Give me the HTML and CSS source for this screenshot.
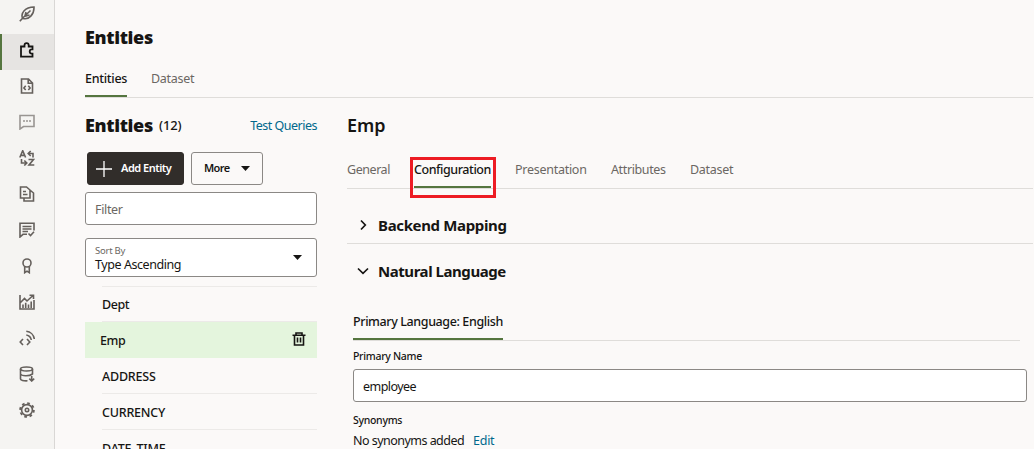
FILE: index.html
```html
<!DOCTYPE html>
<html lang="en">
<head>
<meta charset="utf-8">
<title>Entities</title>
<link rel="stylesheet" href="styles.css">
</head>
<body>
<div class="app">
  <nav class="rail">
    <a class="rail-item"><svg viewBox="0 0 16 16"><path d="M.8 15.300 3.500 12.300C1.500 7 6 1.200 15 1 15.300 8 10 14.500 3.500 12.300M3.500 12.300 11.500 4.500M6 10 7 6M6 10.200 10.500 9"/></svg></a>
    <a class="rail-item selected"><svg viewBox="0 0 16 16"><path d="M2 4.500H5.500V3.300a2 2 0 0 1 4.200 0V4.500H13.500V7.400h-.7a2.100 2.100 0 0 0 0 4.200h.7v3H2z"/></svg></a>
    <a class="rail-item"><svg viewBox="0 0 16 16"><path d="M2.500 1H9.500L13.500 5V15H2.500zM9.200 1V5.200H13.500M6.700 7.800 4.900 9.900 6.700 12M9.300 7.800 11.100 9.900 9.300 12"/></svg></a>
    <a class="rail-item muted"><svg viewBox="0 0 16 16"><path d="M1 1.500H15V12.500H4.500L1 15z"/><path d="M4 7h2M7 7h2M10 7h2"/></svg></a>
    <a class="rail-item"><svg viewBox="0 0 16 16"><path d="M.8 7.500 3.700 .7 6.600 7.500M1.800 5.400H5.600M9.500 9.500H14.500L10 15H15.300M14 7.500V3.500H9.500M11.700 1 9.200 3.500 11.700 6M2.500 9V13H7.500M5.300 10.500 7.800 13 5.300 15.500"/></svg></a>
    <a class="rail-item"><svg viewBox="0 0 16 16"><path d="M1.500 1H7.500L11 4V12H1.500zM4 5.500H7M4 8.500H8.500M11.500 4.500 14.500 7V15H5V12.500"/></svg></a>
    <a class="rail-item"><svg viewBox="0 0 16 16"><path d="M15 8.500V1.300H1V15L4 12.300H8M3.500 4.500H12.500M3.500 7H12.500M3.500 9.500H9M9.500 11.500 11.500 13.500 15 9.800"/></svg></a>
    <a class="rail-item"><svg viewBox="0 0 16 16"><circle cx="8" cy="5" r="4"/><path d="M5.700 8.500V14.700L8 13.200 10.300 14.700V8.500"/></svg></a>
    <a class="rail-item"><svg viewBox="0 0 16 16"><path d="M1 1V15H15V6M1.500 8.500 5.500 4.500 8 7 14 1.500M10.500 1.200H14.500V5M4 14V10.500M6.700 14V8.800M9.500 14V10.500M12.200 14V7.500"/></svg></a>
    <a class="rail-item"><svg viewBox="0 0 16 16"><path d="M4 9 1.200 12 4 15M8 9 10.800 12 8 15M7.300 5A6 6 0 0 1 12.300 10M7.300 1.200A9 9 0 0 1 15.300 9"/></svg></a>
    <a class="rail-item"><svg viewBox="0 0 16 16"><ellipse cx="7.500" cy="3" rx="6" ry="2"/><path d="M1.500 3V13C1.500 14.300 4.500 15 8.500 14.800M13.500 3V8.500M1.500 8C2.500 10 10 10.500 13.500 8M12.700 10V15M10.300 12.700 12.700 15 15.200 12.700"/></svg></a>
    <a class="rail-item"><svg viewBox="0 0 16 16"><circle cx="8" cy="8" r="5.400"/><circle cx="8" cy="8" r="1.700"/><circle class="teeth" cx="8" cy="8" r="6.900"/></svg></a>
  </nav>

  <main class="main">
    <h1 class="title">Entities</h1>
    <div class="tabs page-tabs">
      <a class="tab active t-entities">Entities</a>
      <a class="tab t-dataset">Dataset</a>
    </div>

    <div class="columns">
      <section class="list-pane">
        <header class="list-head">
          <h2 class="title">Entities</h2>
          <span class="count">(12)</span>
          <a class="link queries">Test Queries</a>
        </header>
        <div class="buttons">
          <button class="btn primary"><svg class="plus" viewBox="0 0 16 16"><path d="M8 0V16M0 8H16"/></svg><span>Add Entity</span></button>
          <button class="btn more"><span>More</span><i class="caret"></i></button>
        </div>
        <div class="field filter">Filter</div>
        <div class="field select">
          <div><div class="select-label">Sort By</div><div class="select-value">Type Ascending</div></div>
          <i class="caret"></i>
        </div>
        <ul class="entities">
          <li class="entity first">Dept</li>
          <li class="entity current"><span>Emp</span><svg class="trash" viewBox="0 0 14 14"><path d="M.5 3.200H13.500M4 3V1H10V3M2.500 3.500V13H11.500V3.500M5.500 5.500V10.500M8.500 5.500V10.500"/></svg></li>
          <li class="entity caps">ADDRESS</li>
          <li class="entity caps">CURRENCY</li>
          <li class="entity caps">DATE_TIME</li>
        </ul>
      </section>

      <section class="detail">
        <h2 class="detail-title">Emp</h2>
        <div class="tabs detail-tabs">
          <a class="tab t-general">General</a>
          <a class="tab active t-config">Configuration<span class="marker"></span></a>
          <a class="tab t-present">Presentation</a>
          <a class="tab t-attr">Attributes</a>
          <a class="tab t-dataset">Dataset</a>
        </div>
        <div class="panel-head divided"><svg class="chevron" viewBox="0 0 12 12"><path d="M4 1.500 8.300 6 4 10.500"/></svg><h3 class="backend">Backend Mapping</h3></div>
        <div class="panel-head"><svg class="chevron" viewBox="0 0 12 12"><path d="M1 3.500 6 8.300 11 3.500"/></svg><h3 class="natural">Natural Language</h3></div>
        <div class="panel-body">
          <div class="tabs lang-tabs"><a class="tab active t-lang">Primary Language: English</a></div>
          <div class="label l-name">Primary Name</div>
          <div class="field name-input">employee</div>
          <div class="label l-syn">Synonyms</div>
          <div class="synonyms"><span class="none">No synonyms added</span><a class="link edit">Edit</a></div>
        </div>
      </section>
    </div>
  </main>
</div>
</body>
</html>
```
FILE: styles.css
```css
* { box-sizing: border-box; }
body {
  margin: 0;
  overflow: hidden;
  background: #fbf9f8;
  color: #161513;
  font: 12.5px/20px "Noto Sans", "Open Sans", sans-serif;
}
h1, h2, h3, ul { margin: 0; padding: 0; font-weight: inherit; }
ul { list-style: none; }
svg { display: block; fill: none; stroke: currentColor; flex: none; }

.app { display: flex; height: 449px; overflow: hidden; }

.rail {
  flex: none;
  width: 55px;
  background: #f5f4f2;
  border-right: 1px solid #d9d7d5;
}
.rail-item {
  display: flex;
  justify-content: center;
  align-items: center;
  height: 36px;
  padding-bottom: 4px;
  color: #65605c;
}
.rail-item:first-child { margin-top: -2px; }
.rail-item.selected {
  background: #e6e4e2;
  border-left: 2px solid #55753f;
  padding-right: 2px;
  color: #161513;
}
.rail-item.muted { color: #999592; }
.rail-item svg { width: 16px; height: 16px; stroke-width: 1.6; }
.rail-item.selected svg { stroke-width: 1.8; }
.rail-item .teeth { stroke-width: 1.8; stroke-dasharray: 2.71; }

.main { flex: 1; min-width: 0; padding: 24px 1px 0 30px; }
.title { font-size: 18px; line-height: 26px; font-weight: 900; letter-spacing: -.35px; }
.tabs { display: flex; border-bottom: 1px solid #dfddda; }
.tab { position: relative; white-space: nowrap; color: #6b6763; margin-bottom: -1px; padding-top: 1px; }
.tab.active { height: 29px; color: #161513; border-bottom: 2px solid #55753f; font-weight: 500; }

.page-tabs { height: 30px; margin-top: 18px; gap: 24px; }
.t-entities { width: 42px; letter-spacing: -.28px; }
.t-dataset { width: 43px; letter-spacing: -.3px; }

.columns { display: flex; gap: 30px; }
.list-pane { width: 232px; flex: none; padding-top: 14px; }
.list-head { display: flex; height: 26px; }
.list-head .title { width: 74px; }
.count { font-size: 13px; line-height: 27px; font-weight: 500; letter-spacing: -.15px; }
.queries { margin-left: auto; line-height: 27px; letter-spacing: -.5px; }
.link { color: #00688c; }

.buttons { display: flex; gap: 7px; margin: 14px 0 7px 2px; }
.btn {
  display: flex;
  align-items: center;
  height: 33px;
  padding: 0;
  border: 1px solid #8b8885;
  border-radius: 3px;
  background: transparent;
  color: #161513;
  font: 600 11px/16px "Noto Sans", sans-serif;
  white-space: nowrap;
}
.btn > span { margin-top: -2px; }
.btn.primary { width: 97px; padding-left: 8px; gap: 9px; background: #312d2a; border-color: #312d2a; color: #fff; letter-spacing: -.5px; }
.btn.more { width: 72px; padding: 0 12px; justify-content: space-between; letter-spacing: -.6px; }
.plus { width: 16px; height: 16px; stroke-width: 1.3; }
.caret { width: 9px; height: 5px; background: #161513; clip-path: polygon(0 0, 100% 0, 50% 100%); }

.field { border: 1px solid #8b8885; border-radius: 3px; background: #fff; padding: 0 9px; white-space: nowrap; }
.filter { height: 33px; line-height: 33px; color: #6b6763; letter-spacing: -.35px; }
.select { display: flex; align-items: center; justify-content: space-between; height: 39px; margin-top: 13px; padding: 0 14px 0 9px; }
.select-label { font-size: 9.5px; line-height: 12px; color: #6b6763; margin-top: 1px; letter-spacing: -.25px; }
.select-value { line-height: 15px; letter-spacing: -.43px; }

.entities { margin-top: 9px; }
.entity { height: 36px; margin-left: 17px; border-bottom: 1px solid #eceae8; line-height: 37px; font-weight: 500; }
.entity.first { border-top: 1px solid #eceae8; line-height: 35px; letter-spacing: -.45px; }
.entity.current {
  display: flex;
  justify-content: space-between;
  margin-left: 0;
  padding: 0 11px 0 15px;
  background: #e4f5dd;
  border-color: #e4f5dd;
  letter-spacing: -.4px;
}
.entity.caps { letter-spacing: -.22px; }
.trash { width: 14px; height: 14px; margin-top: 10px; stroke-width: 1.6; }

.detail { flex: 1; min-width: 0; padding-top: 14px; }
.detail-title { font-size: 18px; line-height: 26px; font-weight: 600; }
.detail-tabs { height: 30px; margin-top: 21px; gap: 24px; }
.marker { position: absolute; left: -4px; top: -2px; width: 86px; height: 41px; border: 3px solid #ed1c24; }
.t-general { width: 43px; letter-spacing: -.45px; }
.t-config { width: 77px; letter-spacing: -.44px; }
.t-present { width: 72px; letter-spacing: -.27px; }
.t-attr { width: 55px; letter-spacing: -.37px; }

.panel-head { display: flex; align-items: center; height: 55px; padding-left: 10px; gap: 9px; }
.panel-head.divided { padding-top: 18px; border-bottom: 1px solid #dfddda; }
.panel-head:not(.divided) { padding-bottom: 1px; }
.panel-head h3 { font-size: 15px; line-height: 20px; font-weight: 700; white-space: nowrap; }
.backend { letter-spacing: -.35px; }
.natural { letter-spacing: -.45px; }
.chevron { width: 12px; height: 12px; stroke-width: 1.7; }
.panel-body { padding: 12px 6px 0; }
.lang-tabs { height: 30px; margin-right: 7px; }
.t-lang { width: 150px; letter-spacing: -.39px; }
.label { font-size: 10.5px; line-height: 16px; font-weight: 500; letter-spacing: -.3px; }
.l-name { margin-top: 7px; }
.name-input { height: 33px; line-height: 33px; margin-top: 5px; letter-spacing: -.55px; }
.l-syn { margin-top: 10px; }
.synonyms { display: flex; margin-top: 3px; white-space: nowrap; }
.none { width: 120px; letter-spacing: -.53px; }
.edit { letter-spacing: -.25px; }
```
